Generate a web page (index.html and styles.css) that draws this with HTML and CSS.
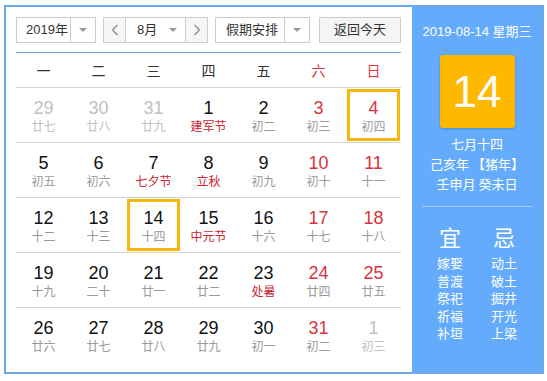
FILE: index.html
```html
<!DOCTYPE html>
<html>

<head>
    <title>万年历</title>
    <meta charset="utf-8">
    <link rel="stylesheet" href="styles.css">
</head>
<body>
    <div class="calendar">
        <div class="main">
            <div class="toolbar">
                <div class="select year-select">
                    <span class="select-text">2019年</span>
                    <span class="select-arrow"><i class="caret"></i></span>
                </div>
                <div class="select month-select">
                    <span class="nav-btn">
                        <svg width="8" height="12" viewBox="0 0 8 12"><polyline points="6.5,1 1.5,6 6.5,11" fill="none" stroke="#888" stroke-width="1.2"/></svg>
                    </span>
                    <span class="month-mid">
                        <span class="month-text">8月</span>
                        <i class="caret"></i>
                    </span>
                    <span class="nav-btn next">
                        <svg width="8" height="12" viewBox="0 0 8 12"><polyline points="1.5,1 6.5,6 1.5,11" fill="none" stroke="#888" stroke-width="1.2"/></svg>
                    </span>
                </div>
                <div class="select holiday-select">
                    <span class="select-text">假期安排</span>
                    <span class="select-arrow"><i class="caret"></i></span>
                </div>
                <div class="today-btn">返回今天</div>
            </div>

            <div class="table">
                <div class="week">
                    <span>一</span><span>二</span><span>三</span><span>四</span><span>五</span>
                    <span class="red">六</span><span class="red">日</span>
                </div>

                <div class="row">
                    <div class="day other"><div class="num">29</div><div class="lunar">廿七</div></div>
                    <div class="day other"><div class="num">30</div><div class="lunar">廿八</div></div>
                    <div class="day other"><div class="num">31</div><div class="lunar">廿九</div></div>
                    <div class="day"><div class="num">1</div><div class="lunar fest">建军节</div></div>
                    <div class="day"><div class="num">2</div><div class="lunar">初二</div></div>
                    <div class="day weekend"><div class="num">3</div><div class="lunar">初三</div></div>
                    <div class="day weekend selected"><div class="num">4</div><div class="lunar">初四</div></div>
                </div>
                <div class="row">
                    <div class="day"><div class="num">5</div><div class="lunar">初五</div></div>
                    <div class="day"><div class="num">6</div><div class="lunar">初六</div></div>
                    <div class="day"><div class="num">7</div><div class="lunar fest">七夕节</div></div>
                    <div class="day"><div class="num">8</div><div class="lunar fest">立秋</div></div>
                    <div class="day"><div class="num">9</div><div class="lunar">初九</div></div>
                    <div class="day weekend"><div class="num">10</div><div class="lunar">初十</div></div>
                    <div class="day weekend"><div class="num">11</div><div class="lunar">十一</div></div>
                </div>
                <div class="row">
                    <div class="day"><div class="num">12</div><div class="lunar">十二</div></div>
                    <div class="day"><div class="num">13</div><div class="lunar">十三</div></div>
                    <div class="day selected"><div class="num">14</div><div class="lunar">十四</div></div>
                    <div class="day"><div class="num">15</div><div class="lunar fest">中元节</div></div>
                    <div class="day"><div class="num">16</div><div class="lunar">十六</div></div>
                    <div class="day weekend"><div class="num">17</div><div class="lunar">十七</div></div>
                    <div class="day weekend"><div class="num">18</div><div class="lunar">十八</div></div>
                </div>
                <div class="row">
                    <div class="day"><div class="num">19</div><div class="lunar">十九</div></div>
                    <div class="day"><div class="num">20</div><div class="lunar">二十</div></div>
                    <div class="day"><div class="num">21</div><div class="lunar">廿一</div></div>
                    <div class="day"><div class="num">22</div><div class="lunar">廿二</div></div>
                    <div class="day"><div class="num">23</div><div class="lunar fest">处暑</div></div>
                    <div class="day weekend"><div class="num">24</div><div class="lunar">廿四</div></div>
                    <div class="day weekend"><div class="num">25</div><div class="lunar">廿五</div></div>
                </div>
                <div class="row last">
                    <div class="day"><div class="num">26</div><div class="lunar">廿六</div></div>
                    <div class="day"><div class="num">27</div><div class="lunar">廿七</div></div>
                    <div class="day"><div class="num">28</div><div class="lunar">廿八</div></div>
                    <div class="day"><div class="num">29</div><div class="lunar">廿九</div></div>
                    <div class="day"><div class="num">30</div><div class="lunar">初一</div></div>
                    <div class="day weekend"><div class="num">31</div><div class="lunar">初二</div></div>
                    <div class="day other"><div class="num">1</div><div class="lunar">初三</div></div>
                </div>
            </div>
        </div>

        <div class="side">
            <div class="side-date">2019-08-14 星期三</div>
            <div class="big-day">14</div>
            <div class="lunar-info">
                <p>七月十四</p>
                <p>己亥年 【猪年】</p>
                <p>壬申月 癸未日</p>
            </div>
            <div class="almanac">
                <div class="almanac-col">
                    <h4>宜</h4>
                    <p>嫁娶</p>
                    <p>普渡</p>
                    <p>祭祀</p>
                    <p>祈福</p>
                    <p>补垣</p>
                </div>
                <div class="almanac-col">
                    <h4>忌</h4>
                    <p>动土</p>
                    <p>破土</p>
                    <p>掘井</p>
                    <p>开光</p>
                    <p>上梁</p>
                </div>
            </div>
        </div>
    </div>
</body>

</html>
```

FILE: styles.css
```css
body {
    margin: 0;
    padding: 0;
    background-color: #ffffff;
    font-family: "Liberation Sans", "Noto Sans CJK SC", sans-serif;
    color: #333333;
}

.calendar {
    display: flex;
    width: 540px;
    height: 369px;
    margin: 5px 0 0 4px;
    border: 2px solid #6ea8e8;
    box-sizing: border-box;
}

.main {
    width: 406px;
    padding: 10px 11px 0 10px;
    box-sizing: border-box;
}

/* toolbar */
.toolbar {
    display: flex;
    gap: 7px;
    height: 26px;
}

.select {
    display: flex;
    height: 26px;
    border: 1px solid #cccccc;
    box-sizing: border-box;
    background-color: #ffffff;
    font-size: 13px;
}

.year-select {
    width: 80px;
}

.year-select .select-text {
    padding-left: 7px;
}

.month-select {
    width: 105px;
}

.holiday-select {
    width: 95px;
}

.holiday-select .select-text {
    padding-left: 4px;
}

.select-text {
    flex: 1;
    text-align: center;
    line-height: 24px;
}

.select-arrow {
    width: 24px;
    display: flex;
    align-items: center;
    justify-content: center;
    border-left: 1px solid #cccccc;
}

.caret {
    display: inline-block;
    width: 0;
    height: 0;
    border-top: 4px solid #999999;
    border-left: 4px solid transparent;
    border-right: 4px solid transparent;
}

.nav-btn {
    width: 21px;
    display: flex;
    align-items: center;
    justify-content: center;
    background-color: #f6f6f6;
    border-right: 1px solid #cccccc;
}

.nav-btn.next {
    border-right: none;
    border-left: 1px solid #cccccc;
}

.month-mid {
    flex: 1;
    display: flex;
    align-items: center;
    padding: 0 8px 0 11px;
    line-height: 24px;
}

.month-text {
    flex: 1;
}

.today-btn {
    margin-left: auto;
    width: 82px;
    height: 26px;
    border: 1px solid #cccccc;
    box-sizing: border-box;
    background-color: #f5f5f5;
    text-align: center;
    line-height: 24px;
    font-size: 13px;
}

/* table */
.table {
    margin-top: 9px;
    border-top: 1px solid #6ea8e8;
}

.week {
    display: grid;
    grid-template-columns: repeat(7, 55px);
    height: 35px;
    line-height: 34px;
    border-bottom: 1px solid #d4d4d4;
    box-sizing: border-box;
    text-align: center;
    font-size: 14px;
    font-family: "Noto Sans CJK SC", sans-serif;
}

.red {
    color: #d9333d;
}

.row {
    display: grid;
    grid-template-columns: repeat(7, 55px);
    height: 55px;
    border-bottom: 1px solid #d4d4d4;
    box-sizing: border-box;
}

.row.last {
    border-bottom: none;
}

.day {
    padding-top: 10px;
    text-align: center;
    box-sizing: border-box;
}

.num {
    font-size: 18px;
    line-height: 20px;
    color: #111111;
}

.lunar {
    font-size: 12px;
    line-height: 16px;
    color: #999999;
    font-family: "Noto Sans CJK SC", sans-serif;
}

.weekend .num {
    color: #d9333d;
}

.lunar.fest {
    color: #c9252e;
}

.other .num,
.other .lunar {
    color: #c0c0c0;
}

.selected {
    outline: 3px solid #f7b60c;
    outline-offset: -4px;
}

/* side panel */
.side {
    width: 130px;
    padding-top: 15px;
    box-sizing: border-box;
    background-color: #64acfb;
    color: #ffffff;
    text-align: center;
}

.side-date {
    font-size: 13px;
    line-height: 20px;
}

.big-day {
    width: 75px;
    height: 73px;
    margin: 13px auto 0;
    background-color: #ffb800;
    border-radius: 3px;
    box-shadow: 0 1px 3px rgba(0, 0, 0, 0.2);
    font-size: 44px;
    line-height: 73px;
}

.lunar-info {
    margin: 6px 10px 0;
    padding-bottom: 12px;
    border-bottom: 1px solid #a6cffc;
    font-family: "Noto Sans CJK SC", sans-serif;
}

.lunar-info p {
    margin: 0;
    font-size: 13px;
    line-height: 20px;
}

.almanac {
    display: grid;
    grid-template-columns: 54px 54px;
    justify-content: center;
    margin-top: 16px;
    font-family: "Noto Sans CJK SC", sans-serif;
}

.almanac-col h4 {
    margin: 0 0 5px;
    font-size: 22px;
    line-height: 26px;
    font-weight: normal;
}

.almanac-col p {
    margin: 0;
    font-size: 13px;
    line-height: 17.6px;
}
```
